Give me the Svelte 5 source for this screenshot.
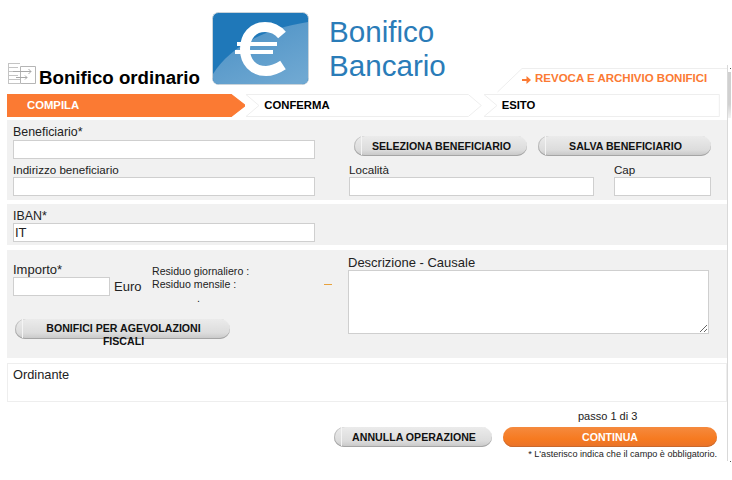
<script>
  const steps = [
    { label: "COMPILA", active: true },
    { label: "CONFERMA" },
    { label: "ESITO", last: true }
  ];

  function stepPath(step) {
    if (step.active) return "M.5 .5H224L238 11.500 224 22.500H.5Z";
    if (step.last) return "M1 .5H237V22.500H1L14 11.500Z";
    return "M1 .5H224L237 11.500 224 22.500H1L14 11.500Z";
  }
</script>

<div class="page">
  <header class="top">
    <div class="title">
      <svg class="title-icon" width="28" height="22" viewBox="0 0 28 22">
        <g fill="none" stroke="#c4c4c4" stroke-width="1">
          <path d="M.5 0V21M.5 .5H12M.5 20.500H12M.5 4.500H10M.5 8.500H12M.5 12.500H10M.5 16.500H12" />
          <path d="M12.500 3.500H27.500V20.500H12.500Z" stroke="#b5b5b5" />
          <path d="M5 8.500H23M20.500 6L23 8.500 20.500 11M8 14.500H19M17 12.500L19 14.500 17 16.500" stroke="#a8a8a8" />
        </g>
      </svg>
      <h1>Bonifico ordinario</h1>
    </div>
    <div class="logo">
      <svg width="97" height="73" viewBox="0 0 97 73">
        <defs>
          <linearGradient id="sheen" x1="0.2" y1="0.1" x2="0.8" y2="1">
            <stop offset="0" stop-color="#4f93c6" />
            <stop offset="1" stop-color="#6fa8d2" />
          </linearGradient>
        </defs>
        <rect x="0.500" y="0.500" width="96" height="72" rx="6" fill="#1f78b9" stroke="#c9d3da" />
        <path d="M1 62C16 38 46 18 96 10V66Q96 72 90 72H7Q1 72 1 66Z" fill="url(#sheen)" />
        <path d="M70 23C65 17 59 15 53 15 41 15 33 24 33 37 33 50 41 59 54 59 60 59 65 57 71 53" fill="none" stroke="#fff" stroke-width="10" />
        <path d="M25 32H65M23 40H61" fill="none" stroke="#fff" stroke-width="4" />
      </svg>
      <div class="brand">Bonifico<br />Bancario</div>
    </div>
    <a class="revoca" href="#revoca">
      <svg class="tab" width="232" height="26" viewBox="0 0 232 26">
        <path d="M.5 25L25 1.500H231" fill="#fff" stroke="#eeeeee" />
      </svg>
      <svg class="arrow" width="9" height="8" viewBox="0 0 9 8"><path d="M0 3h4.500V0L9 4 4.500 8V5H0z" fill="#fb7a33" /></svg>
      <span>REVOCA E ARCHIVIO BONIFICI</span>
    </a>
  </header>

  <nav class="steps">
    {#each steps as step}
      <div class="step" class:active={step.active}>
        <svg class="step-bg" viewBox="0 0 238 23" preserveAspectRatio="none">
          <path d={stepPath(step)} />
        </svg>
        <span>{step.label}</span>
      </div>
    {/each}
  </nav>

  <section class="panel benef">
    <div class="row first">
      <div class="field wide">
        <label for="ben" class="lg">Beneficiario*</label>
        <input id="ben" />
      </div>
      <div class="actions">
        <button class="pill">SELEZIONA BENEFICIARIO</button>
        <button class="pill">SALVA BENEFICIARIO</button>
      </div>
    </div>
    <div class="row second">
      <div class="field wide">
        <label for="ind">Indirizzo beneficiario</label>
        <input id="ind" />
      </div>
      <div class="field loc">
        <label for="loc">Località</label>
        <input id="loc" />
      </div>
      <div class="field cap">
        <label for="cap">Cap</label>
        <input id="cap" />
      </div>
    </div>
  </section>

  <section class="panel iban">
    <div class="field wide">
      <label for="iban" class="lg">IBAN*</label>
      <input id="iban" value="IT" />
    </div>
  </section>

  <section class="panel amount">
    <div class="left">
      <div class="amount-row">
        <div class="field imp">
          <label for="imp" class="xl">Importo*</label>
          <div class="euro"><input id="imp" /><span>Euro</span></div>
        </div>
        <div class="residuo">
          <div>Residuo giornaliero :</div>
          <div>Residuo mensile :</div>
          <div class="dot">.</div>
        </div>
        <div class="dash"></div>
      </div>
      <button class="pill fiscal">BONIFICI PER AGEVOLAZIONI FISCALI</button>
    </div>
    <div class="field desc">
      <label for="desc" class="xl">Descrizione - Causale</label>
      <textarea id="desc"></textarea>
    </div>
  </section>

  <section class="ordinante">Ordinante</section>

  <footer class="foot">
    <div class="passo">passo 1 di 3</div>
    <div class="foot-btns">
      <button class="pill annulla">ANNULLA OPERAZIONE</button>
      <button class="pill go">CONTINUA</button>
    </div>
    <div class="note">* L'asterisco indica che il campo è obbligatorio.</div>
  </footer>
  <div class="rail"></div>
</div>

<style>
  :global(body) {
    background: #fff;
  }
  .page {
    position: relative;
    box-sizing: border-box;
    width: 732px;
    height: 480px;
    padding-left: 7px;
    overflow: hidden;
    font-family: "Liberation Sans", Arial, sans-serif;
    color: #222;
  }
  /* thin frame line and the grey strip on the right of the page */
  .rail {
    position: absolute;
    left: 727px;
    top: 65px;
    width: 1px;
    height: 396px;
    background: #d9d9d9;
  }
  .rail::before {
    content: "";
    position: absolute;
    left: 3px;
    top: 3px;
    width: 1px;
    height: 1px;
    background: #555;
    box-shadow: 0 393px 0 #555;
  }
  .rail::after {
    content: "";
    position: absolute;
    left: 1px;
    top: 7px;
    width: 3px;
    height: 46px;
    background: linear-gradient(#d0d0d0, #d0d0d0 70%, #f4f4f4);
  }
  .top {
    display: flex;
    position: relative;
    height: 94px;
  }
  .title {
    display: flex;
    align-items: flex-end;
    width: 205px;
    height: 91px;
    padding-left: 1px;
  }
  .title-icon {
    margin-bottom: 6px;
  }
  h1 {
    margin: 0 0 2px 3px;
    font-size: 18.700px;
    line-height: 22px;
    color: #000;
  }
  .logo {
    display: flex;
    margin-top: 12px;
    margin-left: -1px;
  }
  .brand {
    margin: 3px 0 0 20px;
    font-size: 29.600px;
    line-height: 34px;
    color: #2a7cb8;
  }
  .revoca {
    position: absolute;
    left: 490px;
    top: 67px;
    width: 232px;
    height: 26px;
    font-size: 11.500px;
    font-weight: bold;
    text-decoration: none;
    color: #fb7a33;
    white-space: nowrap;
  }
  .tab {
    position: absolute;
    left: 0;
    top: 0;
  }
  .arrow {
    position: absolute;
    left: 25px;
    top: 9px;
  }
  .revoca span {
    position: absolute;
    left: 38px;
    top: 4px;
    line-height: 14px;
  }
  .steps {
    display: flex;
    width: 713px;
    height: 23px;
    margin-bottom: 3px;
  }
  .step {
    position: relative;
    flex: 1;
    display: flex;
    align-items: center;
    padding: 0 0 2px 19px;
    font-size: 11.300px;
    font-weight: bold;
    color: #000;
  }
  .step-bg {
    position: absolute;
    inset: 0;
    width: 100%;
    height: 100%;
    fill: #fff;
    stroke: #eee;
  }
  .step span {
    position: relative;
  }
  .step.active {
    color: #fff;
    padding-left: 20px;
  }
  .step.active .step-bg {
    fill: #fb7a33;
    stroke: #fb7a33;
  }
  .panel {
    box-sizing: border-box;
    width: 720px;
    padding: 0 6px;
    background: #f1f1f1;
    font-size: 12px;
  }
  .benef {
    height: 80px;
    margin-bottom: 4px;
    padding-top: 5px;
  }
  .row {
    display: flex;
  }
  .row.second {
    margin-top: 3px;
  }
  .field {
    display: flex;
    flex-direction: column;
  }
  label {
    font-size: 11.600px;
    line-height: 15px;
    color: #222;
  }
  label.lg {
    font-size: 12.400px;
  }
  label.xl {
    font-size: 13px;
  }
  input,
  textarea {
    box-sizing: border-box;
    margin: 0;
    padding: 0 1px;
    border: 1px solid #cfcfcf;
    border-radius: 0;
    background: #fff;
    font: 13px "Liberation Sans", Arial, sans-serif;
    color: #222;
    outline: none;
  }
  input {
    height: 19px;
  }
  .wide {
    width: 302px;
  }
  .actions {
    display: flex;
    gap: 11px;
    margin: 11px 0 0 39px;
  }
  .pill {
    position: relative;
    box-sizing: border-box;
    width: 173px;
    height: 20px;
    padding: 0 0 1px 2px;
    border: 0;
    border-radius: 10px;
    background: linear-gradient(#ebebeb, #dcdcdc 70%, #c6c6c6);
    box-shadow: inset 0 -1px 0 #a5a5a5, inset 1px 0 0 #bdbdbd;
    font: bold 10.600px "Liberation Sans", Arial, sans-serif;
    color: #111;
  }
  .pill::before {
    content: "";
    position: absolute;
    left: 7px;
    top: 0;
    bottom: 1px;
    width: 1px;
    background: #f4f4f4;
  }
  .loc {
    width: 245px;
    margin-left: 34px;
  }
  .cap {
    width: 97px;
    margin-left: 20px;
  }
  .iban {
    height: 41px;
    margin-bottom: 5px;
    padding-top: 6px;
  }
  .iban label {
    line-height: 13px;
  }
  .amount {
    display: flex;
    height: 108px;
    margin-bottom: 5px;
    padding-top: 5px;
  }
  .left {
    width: 335px;
  }
  .amount-row {
    display: flex;
    height: 64px;
  }
  .imp {
    width: 139px;
    padding-top: 8px;
  }
  .imp label {
    line-height: 14px;
  }
  .euro {
    display: flex;
    align-items: center;
    gap: 4px;
    font-size: 13px;
    white-space: nowrap;
  }
  .euro input {
    flex: none;
    width: 97px;
  }
  .residuo {
    width: 172px;
    padding-top: 10px;
    font-size: 10.600px;
    line-height: 13px;
  }
  .dot {
    padding-left: 45px;
    line-height: 15px;
  }
  .dash {
    width: 8px;
    height: 1px;
    margin-top: 29px;
    background: #e8a23c;
  }
  .fiscal {
    display: block;
    width: 215px;
    margin-left: 2px;
    padding: 3px 24px 0 26px;
    line-height: 13px;
    height: 20px;
    overflow: visible;
    white-space: normal;
  }
  .desc textarea {
    width: 361px;
    height: 64px;
    resize: both;
  }
  .ordinante {
    box-sizing: border-box;
    width: 720px;
    height: 39px;
    padding: 3px 5px;
    border: 1px solid #eee;
    font-size: 12.800px;
    line-height: 15px;
  }
  .foot {
    width: 710px;
    margin-top: 7px;
    font-size: 11px;
  }
  .passo {
    padding-left: 571px;
    line-height: 14px;
  }
  .foot-btns {
    display: flex;
    justify-content: flex-end;
    gap: 11px;
    margin-top: 4px;
  }
  .annulla {
    width: 158px;
  }
  .go {
    width: 214px;
    padding-left: 0;
    background: linear-gradient(#f58a3e, #f67a20 60%, #e8722a);
    box-shadow: inset 0 -1px 0 #c9682c;
    color: #fff;
  }
  .go::before {
    display: none;
  }
  .note {
    margin-top: 1px;
    font-size: 9.100px;
    line-height: 12px;
    text-align: right;
  }
</style>
